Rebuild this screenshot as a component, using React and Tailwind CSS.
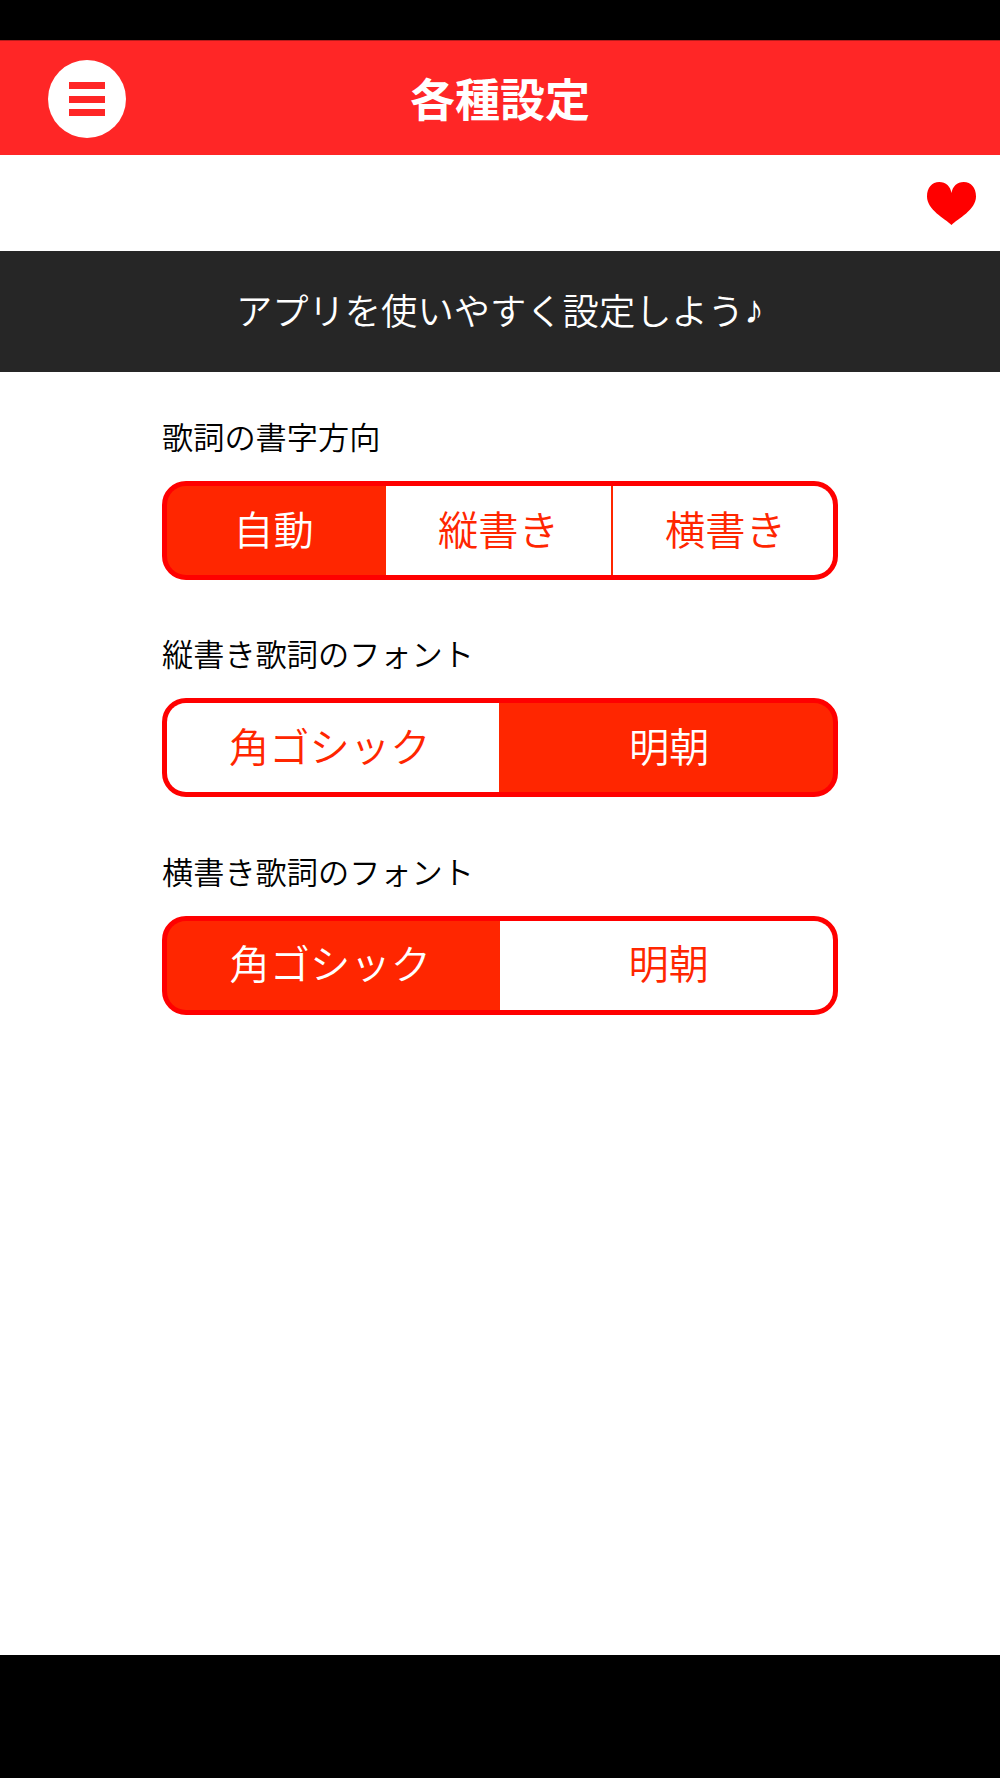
import { useState } from 'react';

const settings = [
  { label: '歌詞の書字方向', options: ['自動', '縦書き', '横書き'], initial: 0 },
  { label: '縦書き歌詞のフォント', options: ['角ゴシック', '明朝'], initial: 1 },
  { label: '横書き歌詞のフォント', options: ['角ゴシック', '明朝'], initial: 0 },
];

function SegmentedControl({ options, initial }) {
  const [selected, setSelected] = useState(initial);

  return (
    <div className="h-[99px] border-[5px] border-[#ff0000] bg-[#ff0000] rounded-[24px] overflow-hidden">
      <div className="flex h-full -ml-[6px] -mr-[5px]">
        {options.map((option, i) => (
          <button
            key={option}
            onClick={() => setSelected(i)}
            className={`flex-1 border-[#ff2600] pb-[5px] text-[40.3px] leading-none ${
              i === selected ? 'bg-[#ff2600] text-white' : 'bg-white text-[#ff2600]'
            } ${i > 0 && i - 1 !== selected ? 'border-l-2' : ''}`}
          >
            {option}
          </button>
        ))}
      </div>
    </div>
  );
}

function App() {
  return (
    <div className="flex flex-col w-[1000px] h-[1778px] bg-white font-[350] font-['Noto_Sans_CJK_JP',sans-serif]">
      {/* Status bar */}
      <div className="h-10 bg-black" />

      {/* Header */}
      <header className="grid grid-cols-[1fr_auto_1fr] items-center h-[115px] px-12 border-t border-[#b81b1b] bg-[#ff2626]">
        <button className="flex flex-col items-center justify-center gap-[6.5px] size-[78px] mt-0.5 rounded-full bg-white" aria-label="menu">
          <span className="w-9 h-[7px] bg-[#ff2626]" />
          <span className="w-9 h-[7px] bg-[#ff2626]" />
          <span className="w-9 h-[7px] bg-[#ff2626]" />
        </button>
        <h1 className="pb-0.5 text-[45px] leading-none font-bold text-white">各種設定</h1>
      </header>

      {/* Favorite */}
      <div className="flex items-center justify-end h-24 pr-6">
        <svg className="w-[49px] h-[43px]" viewBox="0 0 49 43" fill="#ff0000">
          <path d="M24.5 43C18 36.5 0 28 0 14.5C0 5.5 5 0 12.2 0C19 0 23.5 4.5 24.5 11C25.5 4.5 30 0 36.8 0C44 0 49 5.5 49 14.5C49 28 31 36.5 24.5 43Z" />
        </svg>
      </div>

      {/* Message */}
      <div className="flex items-center justify-center h-[121px] pb-[5px] bg-[#262626]">
        <p className="flex items-center text-[36.3px] leading-none text-white">
          アプリを使いやすく設定しよう
          <span className="text-[40px] leading-[36px] font-['DejaVu_Sans',sans-serif]">♪</span>
        </p>
      </div>

      {/* Settings */}
      <main className="flex-1 px-[162px] pt-12">
        {settings.map((setting) => (
          <section key={setting.label} className="mb-[57.3px]">
            <h2 className="h-[61px] text-[31.2px] leading-[31px] text-black">{setting.label}</h2>
            <SegmentedControl options={setting.options} initial={setting.initial} />
          </section>
        ))}
      </main>

      {/* Bottom bar */}
      <div className="h-[123px] bg-black" />
    </div>
  );
}

export default App;
